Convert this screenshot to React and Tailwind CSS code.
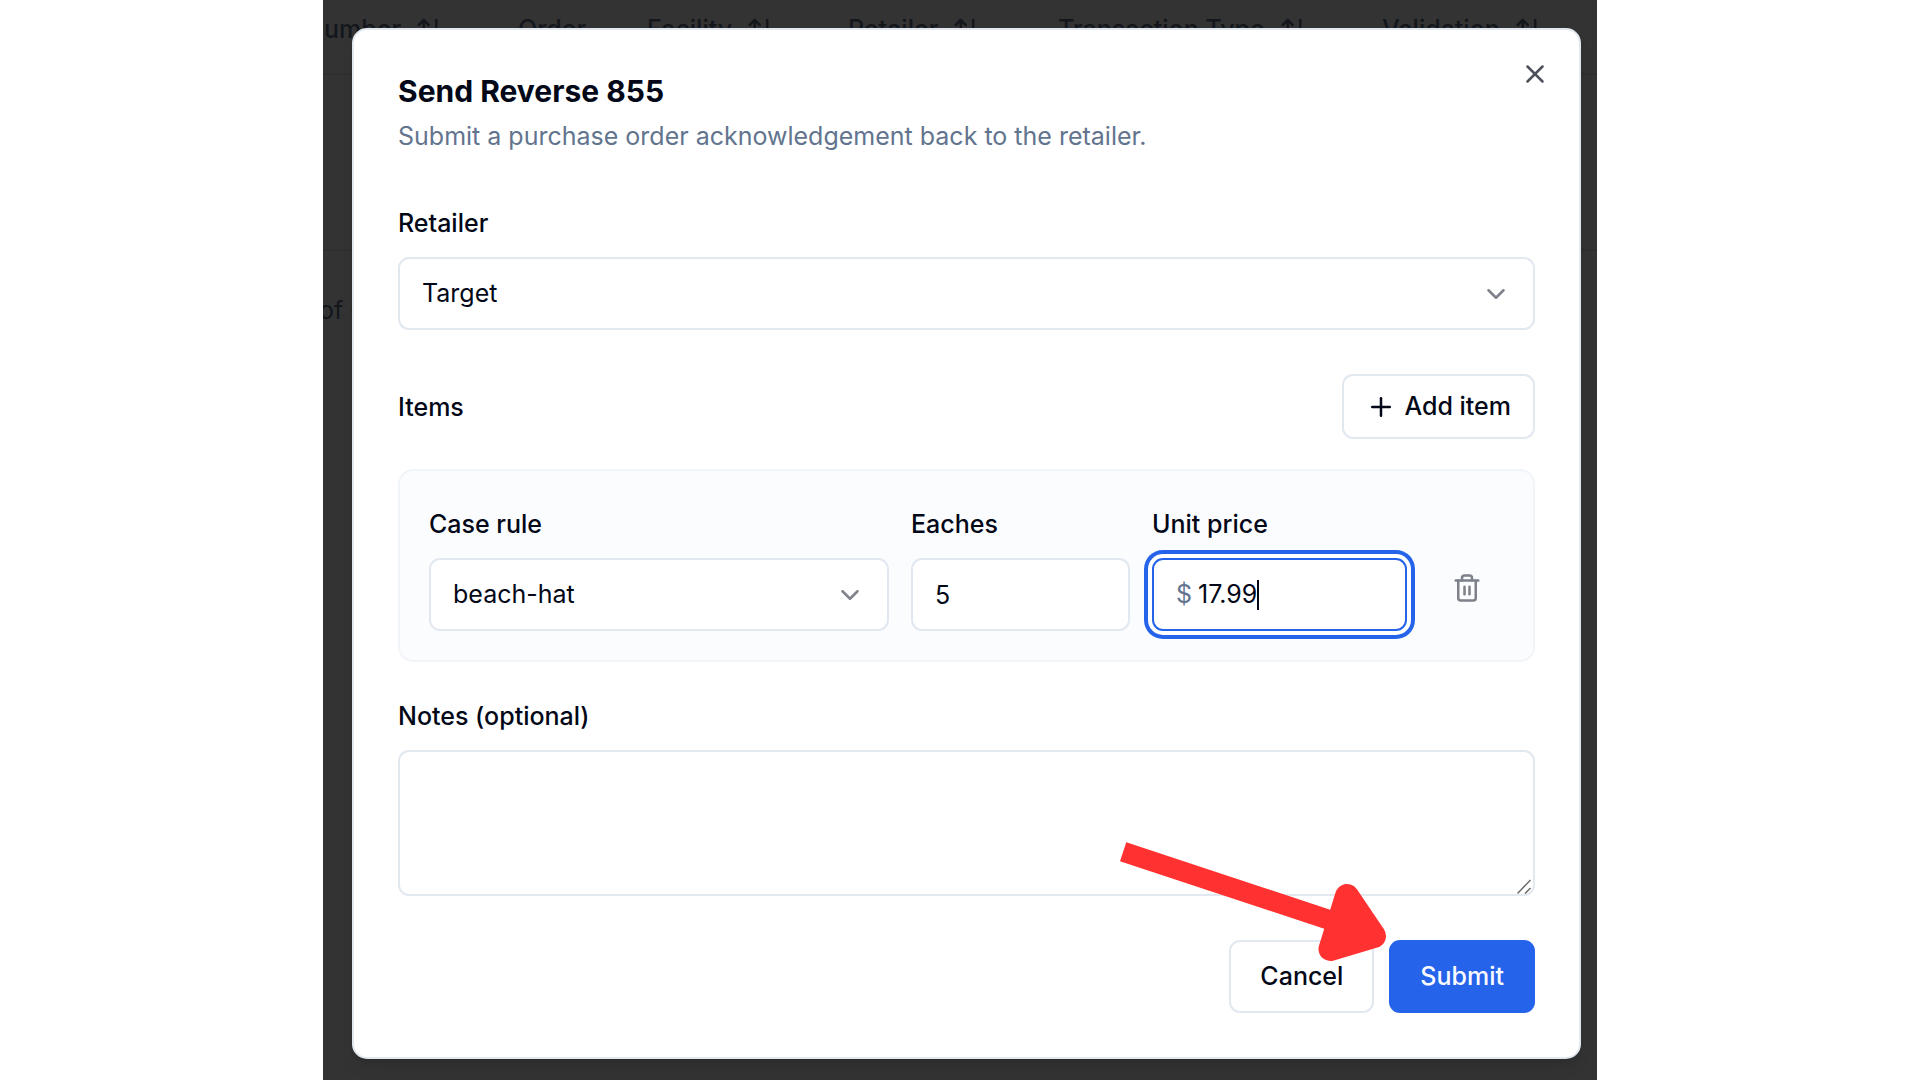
import React, { useState } from 'react';
import { ArrowUpDown, ChevronDown, Plus, Trash2, X } from 'lucide-react';

const COLUMNS = [
  { label: 'umber', sortable: true, width: 'w-[194px]' },
  { label: 'Order', sortable: false, width: 'w-[129px]' },
  { label: 'Facility', sortable: true, width: 'w-[201px]' },
  { label: 'Retailer', sortable: true, width: 'w-[210px]' },
  { label: 'Transaction Type', sortable: true, width: 'w-[324px]' },
  { label: 'Validation', sortable: true, width: '' },
];

const FIELD = 'h-[73px] w-full rounded-[11px] border-2 border-slate-200 bg-white px-[22px]';
const LABEL = 'block font-medium leading-7';

function OrdersTable() {
  return (
    <div className="col-start-1 row-start-1 overflow-hidden text-slate-500">
      <table className="w-full table-fixed">
        <thead>
          <tr className="h-[74px] border-b-2 border-slate-200">
            {COLUMNS.map((col) => (
              <th key={col.label} className={`${col.width} px-px pb-3.5 text-left font-medium`}>
                <span className="flex items-center gap-3.5 whitespace-nowrap">
                  {col.label}
                  {col.sortable && <ArrowUpDown size={30} className="shrink-0" />}
                </span>
              </th>
            ))}
          </tr>
        </thead>
        <tbody>
          <tr className="h-[176px] border-b-2 border-slate-200">
            <td colSpan={COLUMNS.length} />
          </tr>
        </tbody>
      </table>
      <p className="mt-10 -ml-1 leading-[38px]">of 0</p>
    </div>
  );
}

function SelectField({ id, value, onChange, options }) {
  return (
    <div className="grid items-center">
      <select
        id={id}
        value={value}
        onChange={(e) => onChange(e.target.value)}
        className={`${FIELD} col-start-1 row-start-1 appearance-none`}
      >
        {options.map((o) => <option key={o}>{o}</option>)}
      </select>
      <ChevronDown size={30} className="pointer-events-none col-start-1 row-start-1 mr-6 justify-self-end opacity-50" />
    </div>
  );
}

function PointerArrow() {
  return (
    <svg
      className="pointer-events-none absolute right-[191px] bottom-[95px]"
      width="270" height="122" viewBox="1118 840 270 122"
      fill="#ff3131" aria-hidden="true"
    >
      <path d="M1126.3 842.3 L1340 913 L1334 932 L1120 861.3 Z" />
      <path d="M1347 896 L1374 936 L1330.5 949 Z" stroke="#ff3131" strokeWidth="24" strokeLinejoin="round" />
    </svg>
  );
}

function SendReverseDialog() {
  const [retailer, setRetailer] = useState('Target');
  const [caseRule, setCaseRule] = useState('beach-hat');
  const [eaches, setEaches] = useState('5');
  const [price, setPrice] = useState('17.99');
  const [notes, setNotes] = useState('');

  return (
    <div
      role="dialog"
      aria-labelledby="dialog-title"
      className="relative rounded-[15px] border-2 border-slate-200 bg-white px-11 pt-[45px] pb-11 shadow-lg"
    >
      <h2 id="dialog-title" className="text-[30px] font-bold leading-8">Send Reverse 855</h2>
      <p className="mt-2.5 leading-[38px] text-slate-500">
        Submit a purchase order acknowledgement back to the retailer.
      </p>

      <form className="mt-[54px]" onSubmit={(e) => e.preventDefault()}>
        <div className="grid gap-5">
          <label htmlFor="retailer" className={LABEL}>Retailer</label>
          <SelectField id="retailer" value={retailer} onChange={setRetailer} options={['Target']} />
        </div>

        <div className="mt-11 flex items-center justify-between">
          <span className={LABEL}>Items</span>
          <button type="button" className="flex h-[65px] items-center gap-2 rounded-[11px] border-2 border-slate-200 px-[22px] font-medium">
            <Plus size={30} /> Add item
          </button>
        </div>

        <div className="mt-[30px] grid grid-cols-[460fr_219fr_255fr_75px] items-end gap-[22px] rounded-[15px] border-2 border-slate-100 bg-[#fbfcfe] px-[29px] pt-[39px] pb-[29px]">
          <div className="grid gap-5">
            <label htmlFor="case-rule" className={LABEL}>Case rule</label>
            <SelectField id="case-rule" value={caseRule} onChange={setCaseRule} options={['beach-hat']} />
          </div>
          <div className="grid gap-5">
            <label htmlFor="eaches" className={LABEL}>Eaches</label>
            <input id="eaches" value={eaches} onChange={(e) => setEaches(e.target.value)} className={FIELD} />
          </div>
          <div className="grid gap-5">
            <label htmlFor="unit-price" className={LABEL}>Unit price</label>
            <div className="flex h-[73px] items-center rounded-[11px] border-2 border-[#2563eb] bg-white px-[22px] ring-4 ring-[#2563eb] ring-offset-4">
              <span className="mr-1.5 text-slate-500">$</span>
              <input
                id="unit-price"
                value={price}
                onChange={(e) => setPrice(e.target.value)}
                className="field-sizing-content caret-transparent outline-none"
              />
              <span className="h-[30px] w-0.5 bg-[#020817]" />
            </div>
          </div>
          <button type="button" aria-label="Remove item" className="mb-1.5 flex h-[75px] items-center justify-center opacity-50">
            <Trash2 size={30} />
          </button>
        </div>

        <div className="mt-10 grid gap-5">
          <label htmlFor="notes" className={LABEL}>Notes (optional)</label>
          <div className="relative">
            <textarea
              id="notes"
              value={notes}
              onChange={(e) => setNotes(e.target.value)}
              className="block h-[146px] w-full resize-none rounded-[11px] border-2 border-slate-200 px-[22px] py-[15px]"
            />
            <svg className="pointer-events-none absolute right-1 bottom-0.5" width="14" height="15" viewBox="0 0 14 15" stroke="#6b6b6b" strokeWidth="1.5">
              <path d="M0.5 14.5 L13.5 1 M8 14.5 L13.5 9" />
            </svg>
          </div>
        </div>

        <div className="mt-11 flex justify-end gap-[15px] font-medium">
          <button type="button" className="h-[73px] rounded-[11px] border-2 border-slate-200 px-[29px]">Cancel</button>
          <button type="submit" className="h-[73px] rounded-[11px] border-2 border-[#2563eb] bg-[#2563eb] px-[29px] text-slate-50">Submit</button>
        </div>
      </form>

      <button type="button" aria-label="Close" className="absolute top-[29px] right-[29px] opacity-70">
        <X size={30} />
      </button>
      <PointerArrow />
    </div>
  );
}

export default function App() {
  return (
    <main className="mx-auto grid min-h-screen w-full max-w-[1274px] font-['Inter',sans-serif] text-[25px] text-[#020817]">
      <OrdersTable />
      <div className="relative col-start-1 row-start-1 bg-black/80 pt-7 pr-4 pl-[29px]">
        <SendReverseDialog />
      </div>
    </main>
  );
}
